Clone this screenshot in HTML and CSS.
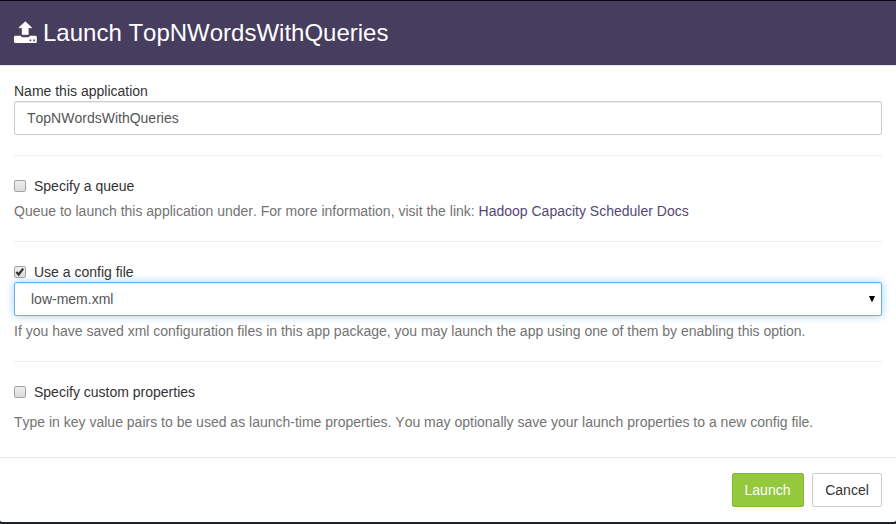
FILE: index.html
```html
<!DOCTYPE html>
<html lang="en">
<head>
<meta charset="utf-8">
<title>Launch TopNWordsWithQueries</title>
<link rel="stylesheet" href="styles.css">
</head>
<body>
<div class="modal">
  <header class="modal-header">
    <svg class="icon" width="24" height="24" viewBox="0 0 24 24" aria-hidden="true">
      <path fill="#fff" stroke="#fff" stroke-width=".7" stroke-linejoin="round" d="M11.3.7 17.8 6.7H14.2V13.6H8.2V6.7H4.8Z"/>
      <path fill="#fff" fill-rule="evenodd" d="M1.2 14.7H6.8Q7.4 16.3 9 16.3H13.6Q15.2 16.3 15.8 14.7H21.6Q22.8 14.7 22.8 15.9V20.8Q22.8 22 21.6 22H1.2Q0 22 0 20.8V15.9Q0 14.7 1.2 14.7ZM15.6 18.4V20.2H17.2V18.4ZM19.2 18.4V20.2H20.8V18.4Z"/>
    </svg>
    <h1>Launch TopNWordsWithQueries</h1>
  </header>
  <main class="modal-body">
    <section>
      <label class="label" for="name">Name this application</label>
      <input class="control" id="name" type="text" value="TopNWordsWithQueries">
    </section>
    <hr>
    <section>
      <label class="label"><span class="box"></span>Specify a queue</label>
      <p class="help">Queue to launch this application under. For more information, visit the link: <a>Hadoop Capacity Scheduler Docs</a></p>
    </section>
    <hr>
    <section>
      <label class="label"><span class="box"><svg width="12" height="12" viewBox="0 0 12 12"><path d="M2.4 6 4.7 8.5 9.2 2.6" fill="none" stroke="#333" stroke-width="2.3"/></svg></span>Use a config file</label>
      <div class="control select"><span>low-mem.xml</span><svg width="6" height="6" viewBox="0 0 6 6"><path d="M0 0H6L3.6 5.5H2.4Z"/></svg></div>
      <p class="help">If you have saved xml configuration files in this app package, you may launch the app using one of them by enabling this option.</p>
    </section>
    <hr>
    <section>
      <label class="label"><span class="box"></span>Specify custom properties</label>
      <p class="help spaced">Type in key value pairs to be used as launch-time properties. You may optionally save your launch properties to a new config file.</p>
    </section>
  </main>
  <footer class="modal-footer">
    <button class="btn primary">Launch</button>
    <button class="btn">Cancel</button>
  </footer>
</div>
</body>
</html>
```
FILE: styles.css
```css
* { box-sizing: border-box; }
body {
  margin: 0;
  height: 524px;
  padding: 1px 0 2px;
  background: linear-gradient(#0b0910 50%, #202124 50%);
  font: 14px/20px "Liberation Sans", Arial, sans-serif;
  font-kerning: none;
  color: #333;
  overflow: hidden;
}
.modal {
  height: 521px;
  background: #fff;
  border-radius: 0 0 2px 2px;
}
.modal-header {
  display: flex;
  height: 65px;
  padding: 20px 14px 0;
  background: #473d5e;
  border-bottom: 1px solid #e5e5e5;
  color: #fff;
}
.icon { flex: none; margin-right: 5px; }
h1 {
  margin: -1px 0 0;
  font-size: 24px;
  line-height: 26px;
  font-weight: 400;
}
.modal-body { padding: 15px 14px 25px; }
.label { display: flex; align-items: center; height: 20px; }
.control {
  display: block;
  width: 100%;
  height: 34px;
  padding: 6px 12px;
  border: 1px solid #ccc;
  border-radius: 2px;
  background: #fff;
  box-shadow: inset 0 1px 1px rgba(0, 0, 0, .075);
  font: inherit;
  font-kerning: none;
  color: #555;
}
.select {
  display: flex;
  align-items: center;
  justify-content: space-between;
  padding: 0 6px 0 16px;
  border-color: #66afe9;
  box-shadow: inset 0 1px 1px rgba(0, 0, 0, .075), 0 0 8px rgba(102, 175, 233, .6);
}
hr {
  height: 1px;
  margin: 20px 0;
  border: 0;
  background: #eee;
}
.help { margin: 5px 0 0; color: #737373; }
.help.spaced { margin-top: 10px; }
.help a { color: #544775; }
.box {
  width: 12px;
  height: 12px;
  margin-right: 8px;
  border: 1px solid #a3a3a3;
  border-radius: 2px;
  background: linear-gradient(#ededed, #dcdcdc);
}
.box svg { display: block; margin: -1px; }
.modal-footer {
  display: flex;
  justify-content: flex-end;
  gap: 8px;
  padding: 15px 14px 0;
  border-top: 1px solid #e5e5e5;
}
.btn {
  height: 34px;
  padding: 0;
  width: 70px;
  border: 1px solid #ccc;
  border-radius: 2px;
  background: #fff;
  color: #333;
  font: inherit;
  font-kerning: none;
}
.primary {
  width: 72px;
  padding-right: 1px;
  background: #94c83d;
  border-color: #86b834;
  color: #fff;
}
```
